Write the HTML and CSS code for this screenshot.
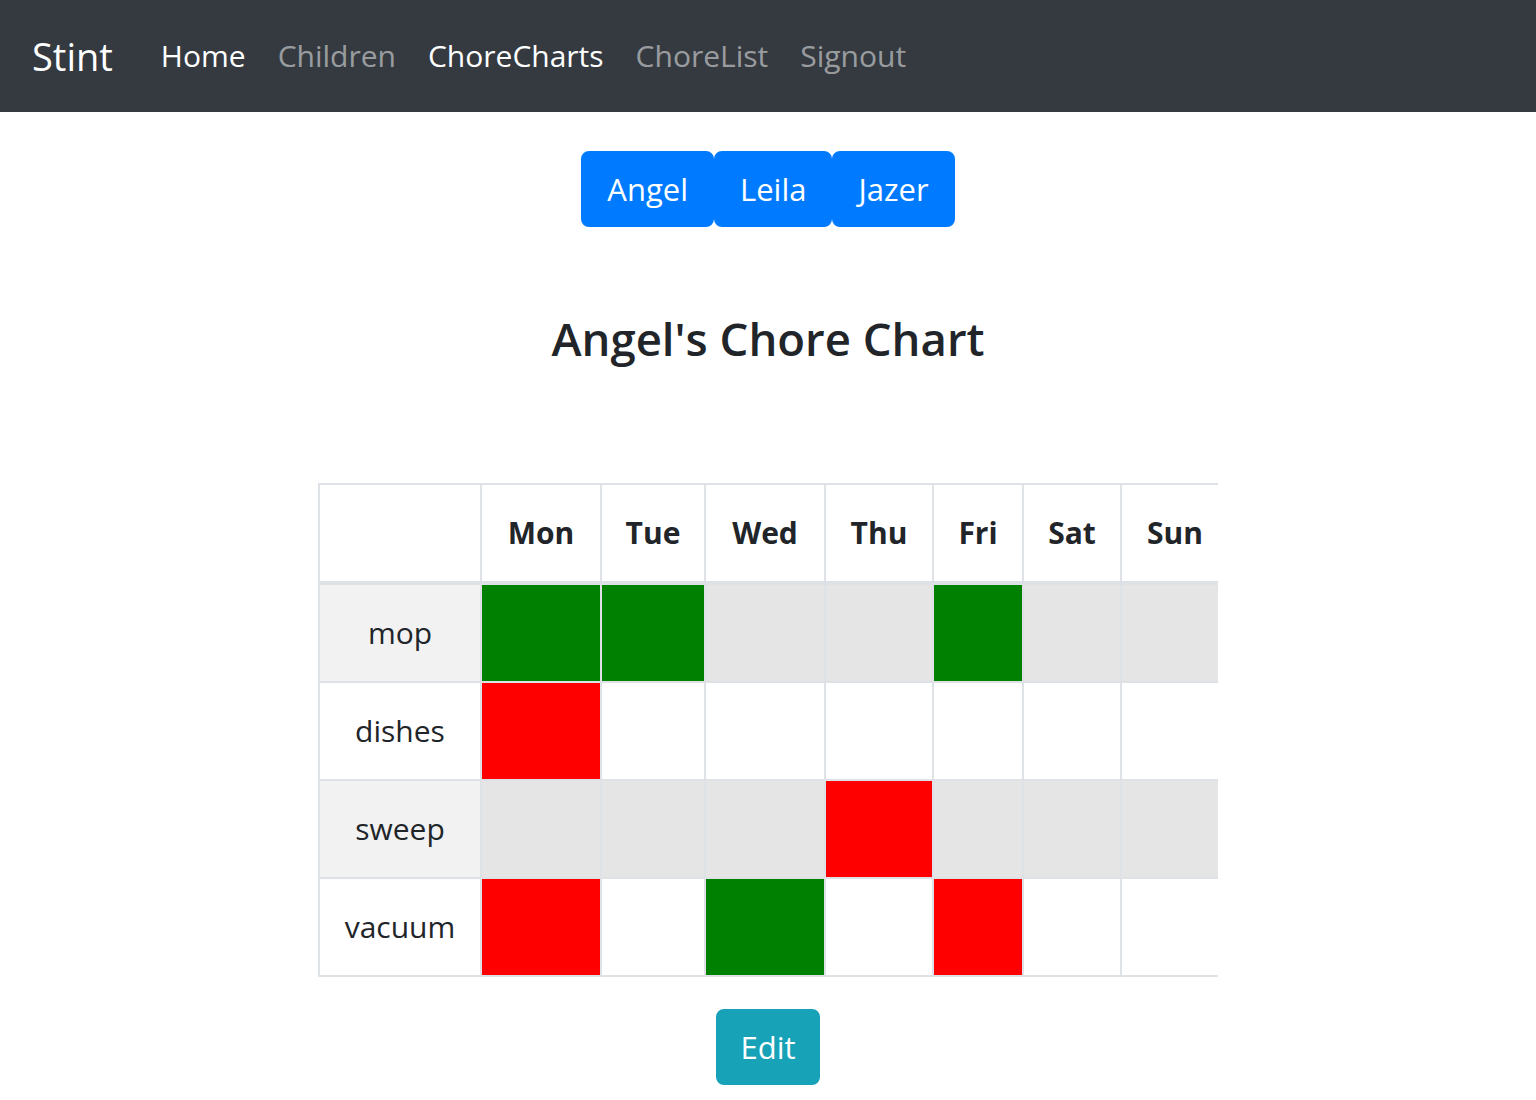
FILE: index.html
```html
<!DOCTYPE html>
<html lang="en">
<head>
<meta charset="utf-8">
<title>Stint - Chore Charts</title>
<link rel="stylesheet" href="styles.css">
</head>
<body>
<nav class="navbar">
  <a class="brand" href="#">Stint</a>
  <ul class="nav">
    <li><a class="nav-link active" href="#">Home</a></li>
    <li><a class="nav-link" href="#">Children</a></li>
    <li><a class="nav-link active" href="#">ChoreCharts</a></li>
    <li><a class="nav-link" href="#">ChoreList</a></li>
    <li><a class="nav-link" href="#">Signout</a></li>
  </ul>
</nav>
<main class="content">
  <div class="kid-buttons">
    <button class="btn btn-primary" type="button">Angel</button>
    <button class="btn btn-primary" type="button">Leila</button>
    <button class="btn btn-primary" type="button">Jazer</button>
  </div>
  <h2 class="chart-title">Angel's Chore Chart</h2>
  <div class="table-wrap">
    <table class="chart">
      <thead>
        <tr>
          <th class="w-chore"></th>
          <th class="w-mon">Mon</th>
          <th class="w-tue">Tue</th>
          <th class="w-wed">Wed</th>
          <th class="w-thu">Thu</th>
          <th class="w-fri">Fri</th>
          <th class="w-sat">Sat</th>
          <th class="w-sun">Sun</th>
        </tr>
      </thead>
      <tbody>
        <tr class="row-alt">
          <td class="chore">mop</td>
          <td class="done"></td><td class="done"></td><td></td><td></td><td class="done"></td><td></td><td></td>
        </tr>
        <tr>
          <td class="chore">dishes</td>
          <td class="missed"></td><td></td><td></td><td></td><td></td><td></td><td></td>
        </tr>
        <tr class="row-alt">
          <td class="chore">sweep</td>
          <td></td><td></td><td></td><td class="missed"></td><td></td><td></td><td></td>
        </tr>
        <tr>
          <td class="chore">vacuum</td>
          <td class="missed"></td><td></td><td class="done"></td><td></td><td class="missed"></td><td></td><td></td>
        </tr>
      </tbody>
    </table>
  </div>
  <div class="actions">
    <button class="btn btn-info" type="button">Edit</button>
  </div>
</main>
</body>
</html>
```
FILE: styles.css
```css
* { box-sizing: border-box; }

body {
  margin: 0;
  font-family: "Open Sans", "Noto Sans", sans-serif;
  color: #212529;
  background: #fff;
}

.navbar {
  display: flex;
  align-items: center;
  height: 112px;
  padding: 0 32px;
  background: #343a40;
}

.brand {
  font-size: 38px;
  line-height: 60px;
  color: #fff;
  text-decoration: none;
  margin-right: 32px;
}

.nav {
  display: flex;
  list-style: none;
  margin: 0;
  padding: 0;
}

.nav-link {
  display: block;
  padding: 16px;
  font-size: 30px;
  line-height: 48px;
  color: rgba(255, 255, 255, 0.5);
  text-decoration: none;
}

.nav-link.active { color: #fff; }

.kid-buttons {
  display: flex;
  justify-content: center;
  margin-top: 39px;
}

.btn {
  font-family: inherit;
  font-size: 31px;
  line-height: 48px;
  padding: 12px 24px;
  border: 2px solid transparent;
  border-radius: 8px;
  color: #fff;
  cursor: pointer;
}

.btn-primary { background: #007bff; border-color: #007bff; }
.btn-info { background: #17a2b8; border-color: #17a2b8; padding: 12px 22px; }

.chart-title {
  margin: 82px 0 116px;
  text-align: center;
  font-size: 45.5px;
  line-height: 58px;
  font-weight: 600;
}

.table-wrap {
  width: 900px;
  margin: 0 auto;
  overflow: hidden;
}

.chart {
  width: 912px;
  table-layout: fixed;
  border-collapse: separate;
  border-spacing: 0;
}

.chart th,
.chart td {
  padding: 24px 0;
  font-size: 30px;
  line-height: 48px;
  text-align: center;
  border-left: 2px solid #dee2e6;
}

.chart th:last-child,
.chart td:last-child { border-right: 2px solid #dee2e6; }

.chart th {
  font-weight: 700;
  border-top: 2px solid #dee2e6;
  border-bottom: 4px solid #dee2e6;
}

.chart tbody tr + tr td { border-top: 2px solid #dee2e6; }
.chart tbody tr:last-child td { border-bottom: 2px solid #dee2e6; }

.w-chore { width: 162px; }
.w-mon { width: 120px; }
.w-tue { width: 104px; }
.w-wed { width: 120px; }
.w-thu { width: 108px; }
.w-fri { width: 90px; }
.w-sat { width: 98px; }
.w-sun { width: 110px; }

.row-alt td { background: #e5e5e5; }
.row-alt td.chore { background: #f2f2f2; }

.chart td.done { background: #008000; }
.chart td.missed { background: #ff0000; }

.actions {
  display: flex;
  justify-content: center;
  margin-top: 32px;
}
```
